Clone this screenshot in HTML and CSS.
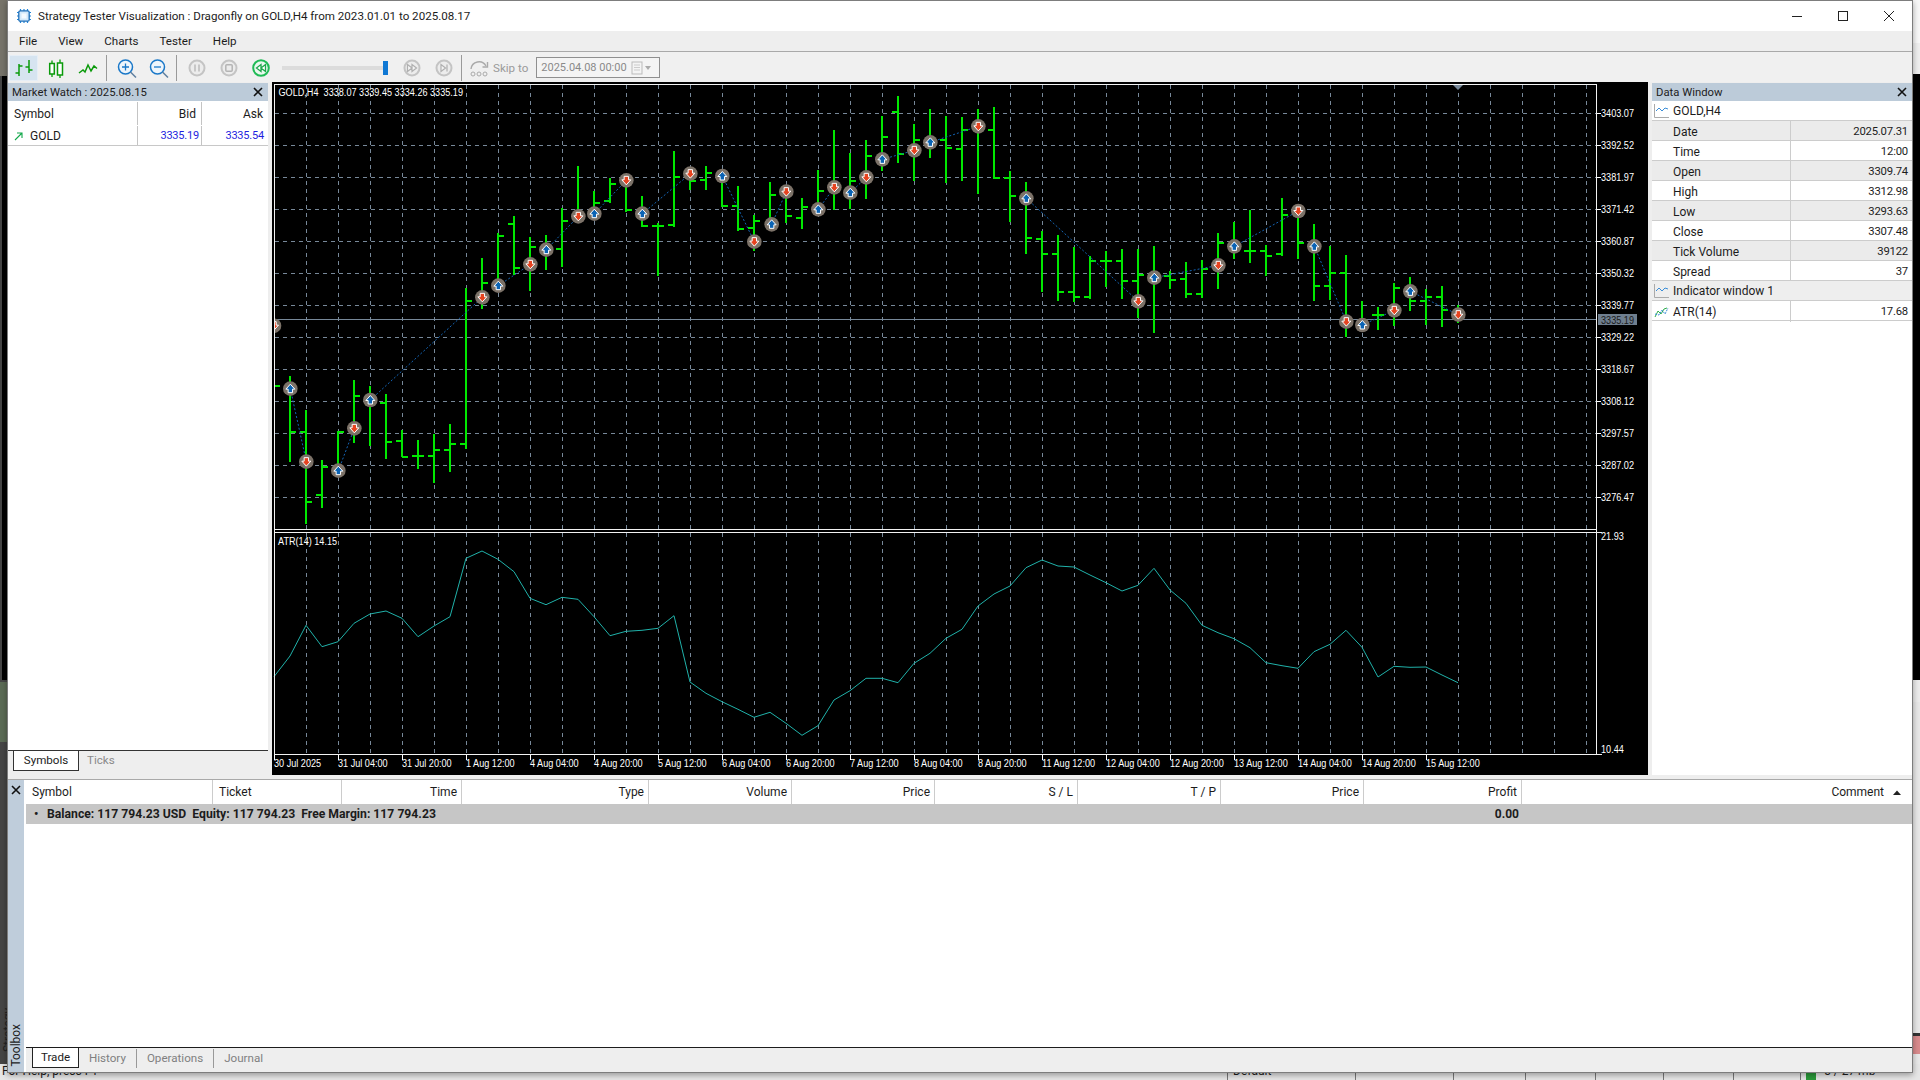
FILE: index.html
```html
<!DOCTYPE html>
<html lang="en">
<head>
<meta charset="utf-8">
<title>Strategy Tester Visualization</title>
<link rel="stylesheet" href="styles.css">
</head>
<body>
<div class="desktop">
  <div class="back-left-top"></div>
  <div class="back-left-chart"></div>
  <div class="back-left-green"></div>
  <div class="back-right-top"></div>
  <div class="back-right-chart"></div>
  <div class="back-right-low"></div>
  <div class="back-right-red"></div>
  <div class="back-vertical">Strategy Tester</div>
  <div class="statusbar">
    <div class="status-cell">For Help, press F1</div>
    <div class="status-cell">Default</div>
    <div class="status-cell"></div>
    <div class="status-cell"></div>
    <div class="status-cell"></div>
    <div class="status-cell"></div>
    <div class="status-cell"></div>
    <div class="status-cell"></div>
    <div class="status-cell status-mem"><span class="mem-bars"></span>5 / 27 mb</div>
  </div>

  <div class="window">
    <header class="titlebar">
      <svg class="app-icon" viewBox="0 0 16 16" width="16" height="16"><path d="M4.500 1v14M8 1v14M11.500 1v14M1 4.500h14M1 8h14M1 11.500h14" stroke="#1f83d8" stroke-width="1.200"/><rect x="2.800" y="2.800" width="10.400" height="10.400" rx="1.500" fill="#d4e9fa" stroke="#1f6fb8" stroke-width="1.300"/><rect x="5.500" y="5.500" width="5" height="5" fill="#f4fafe"/></svg>
      <span class="title-text">Strategy Tester Visualization : Dragonfly on GOLD,H4 from 2023.01.01 to 2025.08.17</span>
      <div class="win-controls">
        <div class="win-btn"><svg viewBox="0 0 12 12" width="12" height="12"><path d="M1 6.500h10" stroke="#222"/></svg></div>
        <div class="win-btn"><svg viewBox="0 0 12 12" width="12" height="12"><rect x="1.500" y="1.500" width="9" height="9" fill="none" stroke="#222"/></svg></div>
        <div class="win-btn"><svg viewBox="0 0 12 12" width="12" height="12"><path d="M1 1l10 10M11 1L1 11" stroke="#222"/></svg></div>
      </div>
    </header>

    <nav class="menubar">
      <span>File</span><span>View</span><span>Charts</span><span>Tester</span><span>Help</span>
    </nav>

    <div class="toolbar">
      <div class="tool tool-active"><svg viewBox="0 0 24 24" width="24" height="24"><path d="M7 8v12M3.500 17H7M7 10h3.500M17 4v13M13.500 11H17M17 14h3.500" fill="none" stroke="#0a9a0a" stroke-width="1.500"/></svg></div>
      <div class="tool"><svg viewBox="0 0 24 24" width="24" height="24"><path d="M8 4.500v3M8 18v3M16 3.500v3.500M16 19v3" stroke="#0a9a0a" stroke-width="1.300"/><rect x="5.700" y="7.500" width="4.600" height="10.500" fill="#fff" stroke="#0a9a0a" stroke-width="1.500"/><rect x="13.500" y="7" width="5" height="12" fill="#fff" stroke="#0a9a0a" stroke-width="1.500"/></svg></div>
      <div class="tool"><svg viewBox="0 0 24 24" width="24" height="24"><path d="M3 17l4-3 2 2 3-7 3 6 3-5 3 2.500" fill="none" stroke="#0a9a0a" stroke-width="1.500"/></svg></div>
      <div class="tool-sep tool-sep-a"></div>
      <div class="tool"><svg viewBox="0 0 24 24" width="24" height="24"><circle cx="10.500" cy="11" r="7" fill="#eef5fb" stroke="#1a78c8" stroke-width="1.500"/><path d="M10.500 7.500v7M7 11h7" stroke="#1a78c8" stroke-width="1.300"/><path d="M15.500 16l5.500 5.500" stroke="#5f7f9f" stroke-width="1.500"/></svg></div>
      <div class="tool"><svg viewBox="0 0 24 24" width="24" height="24"><circle cx="10.500" cy="11" r="7" fill="#eef5fb" stroke="#1a78c8" stroke-width="1.500"/><path d="M7 11h7" stroke="#1a78c8" stroke-width="1.300"/><path d="M15.500 16l5.500 5.500" stroke="#5f7f9f" stroke-width="1.500"/></svg></div>
      <div class="tool-sep"></div>
      <div class="tool tool-gap-a"><svg viewBox="0 0 24 24" width="24" height="24"><circle cx="12" cy="12" r="7.500" fill="#ececec" stroke="#c4c4c4" stroke-width="2"/><path d="M10 8.500v7M14 8.500v7" stroke="#bbb" stroke-width="1.500"/></svg></div>
      <div class="tool"><svg viewBox="0 0 24 24" width="24" height="24"><circle cx="12" cy="12" r="7.500" fill="#ececec" stroke="#c4c4c4" stroke-width="2"/><rect x="8.800" y="8.800" width="6.400" height="6.400" rx="1" fill="none" stroke="#b4b4b4" stroke-width="1.500"/></svg></div>
      <div class="tool"><svg viewBox="0 0 24 24" width="24" height="24"><circle cx="12" cy="12" r="7.800" fill="#e9f8ee" stroke="#1fbb55" stroke-width="2"/><path d="M12 8.500v7L7.500 12zM16.500 8.500v7L12 12z" fill="#fff" stroke="#1fa84d" stroke-width="1.300"/></svg></div>
      <div class="slider"><div class="slider-track"></div><div class="slider-thumb"></div></div>
      <div class="tool tool-gap-b"><svg viewBox="0 0 24 24" width="24" height="24"><circle cx="12" cy="12" r="7.500" fill="#ececec" stroke="#c4c4c4" stroke-width="2"/><path d="M7.500 8.500v7L12 12zM12 8.500v7l4.500-3.500z" fill="#f4f4f4" stroke="#b0b0b0" stroke-width="1.200"/></svg></div>
      <div class="tool"><svg viewBox="0 0 24 24" width="24" height="24"><circle cx="12" cy="12" r="7.500" fill="#ececec" stroke="#c4c4c4" stroke-width="2"/><path d="M9 8.500v7l4.500-3.500zM15 8.500v7" fill="#f4f4f4" stroke="#b0b0b0" stroke-width="1.200"/></svg></div>
      <div class="tool-sep"></div>
      <svg class="skip-icon" viewBox="0 0 24 24" width="24" height="24"><path d="M3 13a8 8 0 0 1 15-3" fill="none" stroke="#aaa" stroke-width="1.400"/><path d="M19.500 6v5h-5" fill="none" stroke="#aaa" stroke-width="1.400"/><circle cx="5" cy="18" r="2" fill="none" stroke="#aaa"/><circle cx="11" cy="18" r="2" fill="none" stroke="#aaa"/><circle cx="17" cy="18" r="2" fill="none" stroke="#aaa"/></svg>
      <span class="skip-label">Skip to</span>
      <div class="date-box">
        <span class="date-text">2025.04.08 00:00</span>
        <svg class="date-icon" viewBox="0 0 20 14" width="20" height="14"><rect x="1" y="1" width="10" height="12" fill="#f4f4f4" stroke="#bbb"/><path d="M3 4h6M3 6.500h6M3 9h6" stroke="#ccc"/><path d="M14 5h6l-3 4z" fill="#aaa"/></svg>
      </div>
    </div>

    <main class="main">
      <section class="panel">
        <div class="panel-head"><span>Market Watch : 2025.08.15</span><svg class="panel-x" viewBox="0 0 10 10" width="10" height="10"><path d="M1 1l8 8M9 1L1 9" stroke="#111" stroke-width="1.600"/></svg></div>
        <div class="mw-row mw-row-head">
          <div class="mw-cell">Symbol</div>
          <div class="mw-cell mw-num">Bid</div>
          <div class="mw-cell mw-num">Ask</div>
        </div>
        <div class="mw-row mw-row-body">
          <div class="mw-cell mw-sym"><svg viewBox="0 0 10 10" width="10" height="10"><path d="M1 9l7-7M3 2h5v5" fill="none" stroke="#12a84a" stroke-width="1.100"/></svg><span>GOLD</span></div>
          <div class="mw-cell mw-val">3335.19</div>
          <div class="mw-cell mw-val mw-last">3335.54</div>
        </div>
        <div class="mw-fill"></div>
        <div class="mw-tabs">
          <div class="mw-tab-on">Symbols</div>
          <div class="mw-tab-off">Ticks</div>
        </div>
      </section>

      <section class="chart">
        <svg id="chart" class="chart-svg" viewBox="272 82 1376 693" width="1376" height="693"></svg>
      </section>

      <section class="panel panel-data">
        <div class="panel-head"><span>Data Window</span><svg class="panel-x" viewBox="0 0 10 10" width="10" height="10"><path d="M1 1l8 8M9 1L1 9" stroke="#111" stroke-width="1.600"/></svg></div>
        <div class="dw-group">
          <svg class="dw-icon" viewBox="0 0 15 14" width="15" height="14"><path d="M.5 0v13.500H15" fill="none" stroke="#aaa"/><path d="M2 7l3-3 3 3 3-3 3 1" fill="none" stroke="#3b8ed8"/></svg>
          <span>GOLD,H4</span>
        </div>
        <div class="dw-row dw-alt"><div class="dw-k">Date</div><div class="dw-v">2025.07.31</div></div>
        <div class="dw-row"><div class="dw-k">Time</div><div class="dw-v">12:00</div></div>
        <div class="dw-row dw-alt"><div class="dw-k">Open</div><div class="dw-v">3309.74</div></div>
        <div class="dw-row"><div class="dw-k">High</div><div class="dw-v">3312.98</div></div>
        <div class="dw-row dw-alt"><div class="dw-k">Low</div><div class="dw-v">3293.63</div></div>
        <div class="dw-row"><div class="dw-k">Close</div><div class="dw-v">3307.48</div></div>
        <div class="dw-row dw-alt"><div class="dw-k">Tick Volume</div><div class="dw-v">39122</div></div>
        <div class="dw-row"><div class="dw-k">Spread</div><div class="dw-v">37</div></div>
        <div class="dw-group dw-group-alt">
          <svg class="dw-icon" viewBox="0 0 15 14" width="15" height="14"><path d="M.5 0v13.500H15" fill="none" stroke="#aaa"/><path d="M2 7l3-3 3 3 3-3 3 1" fill="none" stroke="#3b8ed8"/></svg>
          <span>Indicator window 1</span>
        </div>
        <div class="dw-row">
          <div class="dw-k dw-k-icon"><svg class="dw-icon" viewBox="0 0 15 14" width="15" height="14"><path d="M1 12l3-6 3 3 3-5 3-1" fill="none" stroke="#2fae4a"/><path d="M1 9l4 1 3-5 3 4 3-6" fill="none" stroke="#3b8ed8" stroke-dasharray="2 1"/></svg><span>ATR(14)</span></div>
          <div class="dw-v">17.68</div>
        </div>
      </section>
    </main>

    <section class="toolbox">
      <aside class="toolbox-strip">
        <svg class="strip-x" viewBox="0 0 10 10" width="10" height="10"><path d="M1 1l8 8M9 1L1 9" stroke="#111" stroke-width="1.600"/></svg>
        <span class="strip-label">Toolbox</span>
      </aside>
      <div class="toolbox-body">
        <div class="pos-grid pos-head">
          <div class="pos-cell pos-left">Symbol</div>
          <div class="pos-cell pos-left">Ticket</div>
          <div class="pos-cell">Time</div>
          <div class="pos-cell">Type</div>
          <div class="pos-cell">Volume</div>
          <div class="pos-cell">Price</div>
          <div class="pos-cell">S / L</div>
          <div class="pos-cell">T / P</div>
          <div class="pos-cell">Price</div>
          <div class="pos-cell">Profit</div>
          <div class="pos-cell pos-comment"><span>Comment</span><svg viewBox="0 0 8 5" width="8" height="5"><path d="M0 5l4-4.500L8 5z" fill="#222"/></svg></div>
        </div>
        <div class="pos-grid pos-balance">
          <div class="bal-text"><span class="bal-bullet">•</span><span>Balance: 117 794.23 USD&nbsp; Equity: 117 794.23&nbsp; Free Margin: 117 794.23</span></div>
          <div class="bal-profit">0.00</div>
        </div>
        <div class="pos-fill"></div>
        <div class="bottom-tabs">
          <div class="bt-on">Trade</div>
          <div class="bt-off">History</div>
          <div class="bt-off bt-sep">Operations</div>
          <div class="bt-off bt-sep">Journal</div>
        </div>
      </div>
    </section>
  </div>
</div>
<script src="chart.js"></script>
</body>
</html>
```

FILE: styles.css
```css
* { box-sizing: border-box; }
html, body { margin: 0; height: 100%; }
body { background: #454545; font: 12px Roboto, "Liberation Sans", sans-serif; color: #1c1c1c; overflow: hidden; }
.desktop { position: relative; width: 1920px; height: 1080px; overflow: hidden; }

/* other windows peeking out behind the main one */
.back-left-top { position: absolute; left: 0; top: 0; width: 8px; height: 76px; background: #77746a; }
.back-left-chart { position: absolute; left: 2px; top: 76px; width: 6px; height: 604px; background: #000; }
.back-left-green { position: absolute; left: 0; top: 682px; width: 8px; height: 60px; background: #5b6b55; }
.back-right-top { position: absolute; left: 1912px; top: 0; width: 8px; height: 74px; background: #efefef; border-top: 43px solid #f8f8f8; }
.back-right-chart { position: absolute; left: 1912px; top: 74px; width: 8px; height: 606px; background: #000; }
.back-right-low { position: absolute; left: 1912px; top: 680px; width: 8px; height: 400px; background: #e8e8e8; border-top: 22px solid #ececec; }
.back-right-red { position: absolute; left: 1912px; top: 1033px; width: 8px; height: 26px; background: #d98b8d; border-top: 3px solid #333; border-bottom: 5px solid #e8e8e8; }
.back-vertical { position: absolute; left: 1px; top: 977px; height: 75px; writing-mode: vertical-rl; transform: rotate(180deg); color: #222; font-size: 12px; line-height: 14px; }
.statusbar { position: absolute; left: 0; right: 0; top: 1064px; height: 16px; background: #e6e6e6; display: grid; grid-template-columns: 1227px 128px 98px 72px 70px 68px 70px 67px 1fr; line-height: 14px; }
.status-cell { border-left: 1px solid #777; padding-left: 5px; overflow: hidden; white-space: nowrap; }
.status-cell:first-child { border-left: 0; padding-left: 2px; }
.status-mem { display: flex; gap: 8px; }
.mem-bars { width: 10px; background: #2a9a3a; }

/* main window */
.window { position: absolute; left: 7px; top: 0; width: 1906px; height: 1073px; border: 1px solid #7d7d7d; background: #fff; box-shadow: 0 2px 6px rgba(0,0,0,.35); display: flex; flex-direction: column; }
.titlebar { height: 30px; flex: none; display: flex; align-items: center; padding-left: 8px; background: #fff; }
.app-icon { flex: none; margin-right: 6px; }
.title-text { white-space: nowrap; font-size: 11.600px; }
.win-controls { margin-left: auto; display: flex; height: 100%; }
.win-btn { width: 46px; display: flex; align-items: center; justify-content: center; }

.menubar { height: 21px; flex: none; background: #eee; border-bottom: 1px solid #a9a9a9; display: flex; align-items: center; gap: 21px; padding-left: 11px; font-size: 11.600px; }

.toolbar { height: 30px; flex: none; background: #f0f0f0; display: flex; align-items: center; gap: 3px; padding-left: 1px; padding-top: 1px; }
.tool { width: 29px; height: 26px; flex: none; display: flex; align-items: center; justify-content: center; border: 1px solid transparent; }
.tool-active { background: #d6e4f0; border-color: #e6eef6; }
.tool-sep { width: 1px; height: 26px; flex: none; background: #9a9a9a; }
.tool-sep-a { margin-left: 1px; margin-right: 2px; }
.tool-gap-a { margin-left: 2px; }
.tool-gap-b { margin-left: 6px; }
.slider { position: relative; width: 106px; height: 16px; flex: none; margin-left: 4px; }
.slider-track { position: absolute; left: 0; right: 0; top: 6px; height: 4px; background: #dcdcdc; }
.slider-thumb { position: absolute; right: 0; top: 1px; width: 5px; height: 14px; background: #0f78d4; }
.skip-icon { flex: none; margin-left: 3px; }
.skip-label { color: #9a9a9a; margin-left: -2px; white-space: nowrap; font-size: 11.600px; }
.date-box { width: 124px; height: 21px; flex: none; margin-left: 5px; border: 1px solid #8f8f8f; display: flex; align-items: center; padding-left: 4px; background: #f4f4f4; color: #8a8a8a; }
.date-text { font-size: 11px; width: 90px; white-space: nowrap; }
.date-icon { flex: none; margin-left: 0; }

.main { height: 697px; flex: none; background: #eee; display: flex; gap: 4px; padding-bottom: 4px; }
.panel { width: 260px; flex: none; background: #fff; margin-top: 1px; display: flex; flex-direction: column; }
.panel-head { height: 18px; flex: none; background: #bccbd9; display: flex; align-items: center; justify-content: space-between; padding: 0 5px 0 4px; white-space: nowrap; font-size: 11.300px; }
.panel-x { flex: none; }

.mw-row { display: grid; grid-template-columns: 130px 64px 66px; flex: none; }
.mw-row-head { height: 24px; padding-top: 1px; }
.mw-row-body { height: 21px; border-bottom: 1px solid #c8c8c8; padding-top: 1px; }
.mw-cell { display: flex; align-items: center; border-right: 1px solid #c4c4c4; padding-left: 6px; }
.mw-cell:nth-child(3) { border-right: 0; }
.mw-num { justify-content: flex-end; padding-right: 5px; }
.mw-sym { gap: 6px; }
.mw-val { justify-content: flex-end; padding-right: 2px; color: #1f1fe0; font-size: 11px; letter-spacing: -.2px; }
.mw-last { padding-right: 4px; }
.mw-fill { flex: 1; }
.mw-tabs { height: 25px; flex: none; background: #eee; display: flex; align-items: flex-start; border-top: 1px solid #333; padding-left: 5px; font-size: 11.600px; }
.mw-tab-on { width: 66px; height: 20px; background: #fff; border: 1px solid #333; border-top: 0; display: flex; align-items: center; justify-content: center; padding-bottom: 2px; }
.mw-tab-off { margin-left: 8px; height: 17px; display: flex; align-items: center; color: #8a8a8a; }

.chart { width: 1376px; flex: none; background: #000; }
.chart-svg { display: block; }
.ct { font: 11px "Liberation Sans", Arial, sans-serif; fill: #fff; }
.ct-dark { fill: #1a1a1a; }

.panel-data { margin-top: 1px; }
.dw-group { height: 20px; flex: none; display: flex; align-items: center; gap: 4px; padding: 1px 0 0 2px; border-bottom: 1px solid #ccc; }
.dw-group-alt { background: #eee; }
.dw-icon { flex: none; }
.dw-row { height: 20px; flex: none; display: grid; grid-template-columns: 139px 121px; border-bottom: 1px solid #ccc; }
.dw-alt { background: #ebebeb; }
.dw-k { padding: 1px 0 0 21px; border-right: 1px solid #ccc; display: flex; align-items: center; }
.dw-k-icon { padding-left: 2px; gap: 4px; }
.dw-v { text-align: right; padding-right: 4px; font-size: 11.300px; letter-spacing: -.2px; line-height: 21px; }

.toolbox { flex: 1; min-height: 0; display: flex; border-top: 1px solid #a9a9a9; background: #fff; }
.toolbox-strip { width: 16px; flex: none; background: #bfcddb; display: flex; flex-direction: column; align-items: center; justify-content: space-between; padding: 5px 0 5px; }
.strip-x { flex: none; }
.strip-label { writing-mode: vertical-rl; transform: rotate(180deg); line-height: 14px; }
.toolbox-body { flex: 1; min-width: 0; margin-left: 2px; display: flex; flex-direction: column; }
.pos-grid { display: grid; grid-template-columns: 187px 129px 120px 187px 143px 143px 143px 143px 143px 158px 1fr; flex: none; }
.pos-head { height: 24px; }
.pos-cell { display: flex; align-items: center; justify-content: flex-end; padding: 0 4px; border-right: 1px solid #ccc; white-space: nowrap; }
.pos-left { justify-content: flex-start; padding-left: 6px; }
.pos-comment { border-right: 0; gap: 9px; padding-right: 11px; }
.pos-balance { height: 20px; background: #c6c6c6; font-weight: 700; align-items: center; }
.bal-text { grid-column: 1 / 10; display: flex; white-space: nowrap; padding-left: 8px; font-size: 12.200px; }
.bal-bullet { width: 13px; }
.bal-profit { text-align: right; padding-right: 3px; }
.pos-fill { flex: 1; }
.bottom-tabs { height: 25px; flex: none; background: #eee; border-top: 1px solid #1c1c1c; display: flex; align-items: flex-start; padding-left: 6px; font-size: 11.600px; }
.bt-on { width: 47px; height: 20px; background: #fff; border: 1px solid #222; border-top: 0; display: flex; align-items: center; justify-content: center; padding-bottom: 1px; }
.bt-off { height: 19px; display: flex; align-items: center; padding: 0 10px 2px; color: #808080; margin-top: 1px; }
.bt-sep { border-left: 1px solid #999; }
```

FILE: chart.js
```js
(function () {
  var svg = document.getElementById('chart');
  var parts = [];
  var Y = function (z) { return Math.round(80 + z / 3); };
  var i;

  /* grid */
  var grid = '';
  for (i = 0; i < 13; i++) grid += 'M275 ' + (113.5 + 32 * i) + 'H1596';
  for (i = 0; i <= 40; i++) {
    var gx = 306.5 + 32 * i;
    grid += 'M' + gx + ' 85V530M' + gx + ' 533V754';
  }
  parts.push('<path d="' + grid + '" fill="none" stroke="#778899" stroke-dasharray="4 4" shape-rendering="crispEdges"/>');

  /* current price line */
  parts.push('<path d="M275 319.5H1596" stroke="#778899" fill="none"/>');
  /* shift marker */
  parts.push('<path d="M1453 85h10l-5 5z" fill="#778899"/>');

  /* bars: high, low, open, close in picture units */
  var bars = [
    [888,1145,null,1056],[990,1332,1056,1266],[1140,1283,1244,1160],[1052,1170,null,1056],
    [900,1088,null,947],[918,1098,null,null],[942,1136,968,1085],[1050,1132,1082,1130],
    [1080,1166,1128,1128],[1062,1208,1128,1110],[1032,1175,1110,1092],[625,1106,1092,662],
    [535,686,null,608],[460,600,null,467],[408,584,432,565],[472,632,560,500],
    [465,570,null,null],[385,560,507,422],[258,430,null,null],[333,420,null,370],
    [294,368,363,311],[300,395,null,390],[348,442,null,437],[428,587,437,437],
    [213,440,436,291],[265,330,null,302],[258,330,300,278],[270,382,null,378],
    [318,452,378,448],[405,513,443,423],[305,420,null,344],[320,430,null,408],
    [355,447,413,380],[270,400,null,332],[150,390,null,null],[219,388,null,302],
    [180,357,null,228],[107,272,null,170],[48,250,96,222],[132,303,null,180],
    [87,234,null,null],[108,308,180,204],[111,302,207,150],[86,342,null,null],
    [82,298,150,295],[273,426,295,348],[307,522,null,473],[453,636,477,522],
    [465,662,522,636],[500,666,636,651],[529,656,651,543],[514,621,543,543],
    [507,656,543,603],[507,715,603,585],[498,758,null,null],[572,627,588,600],
    [546,653,597,642],[540,653,642,567],[460,627,null,489],[426,537,null,null],
    [390,548,512,512],[496,588,513,527],[354,527,523,404],[390,538,null,488],
    [432,663,null,618],[498,660,618,578],[525,770,578,null],[662,750,null,null],
    [682,750,705,705],[608,738,null,623],[592,692,null,662],[627,735,662,650],
    [618,740,650,689],[676,728,null,null]
  ];
  var bd = 'M275 ' + Y(917) + 'H280';
  bars.forEach(function (b, k) {
    var x = 290 + 16 * k;
    bd += 'M' + x + ' ' + Y(b[0]) + 'V' + Y(b[1]);
    if (b[2] !== null) bd += 'M' + (x - 6) + ' ' + Y(b[2]) + 'H' + x;
    if (b[3] !== null) bd += 'M' + x + ' ' + Y(b[3]) + 'H' + (x + 6);
  });
  parts.push('<path d="' + bd + '" fill="none" stroke="#00e800" stroke-width="2" shape-rendering="crispEdges"/>');

  /* trades: entry and exit points, in real pixels */
  var A = function (z, y) { return [270 + z / 3, 80 + y / 3]; };
  var B = function (z, y) { return [770 + z / 3, 80 + y / 3]; };
  var C = function (z, y) { return [1270 + z / 3, 80 + y / 3]; };
  var trades = [
    [A(61,926),A(109,1145)],[A(205,1172),A(253,1045)],[A(301,960),A(637,652)],
    [A(685,617),A(781,553)],[A(829,509),A(925,409)],[A(973,401),A(1069,301)],
    [A(1117,401),A(1261,281)],[A(1357,288),A(1453,485)],[B(5,433),B(49,335)],
    [B(145,388),B(193,322)],[B(241,338),B(289,292)],[B(337,238),B(433,211)],
    [B(481,187),B(625,139)],[B(769,355),B(1105,664)],[B(1153,593),B(1345,556)],
    [B(1393,499),C(85,393)],[C(133,499),C(229,725)],[C(277,735),C(373,691)],
    [C(421,634),C(565,704)]
  ];
  var td = '';
  trades.forEach(function (t) { td += 'M' + t[0][0] + ' ' + t[0][1] + 'L' + t[1][0] + ' ' + t[1][1]; });
  parts.push('<path d="' + td + '" fill="none" stroke="#1464b4" stroke-dasharray="2 2"/>');

  function marker(p, up) {
    var arrow = up
      ? 'M0 -4.500L4.500 .500H2.200V4H-2.200V.500H-4.500Z'
      : 'M0 4.500L4.500 -.500H2.200V-4H-2.200V-.500H-4.500Z';
    return '<g transform="translate(' + p[0] + ' ' + p[1] + ')"><circle r="7.300" fill="#7c7268"/>' +
      '<path d="' + arrow + '" fill="' + (up ? '#0b63b4' : '#e6431f') + '" stroke="#fff" stroke-width="1"/></g>';
  }
  parts.push('<clipPath id="plot"><rect x="275" y="85" width="1321" height="445"/></clipPath>');
  var mk = marker(A(12, 737), false);
  trades.forEach(function (t) { mk += marker(t[0], true) + marker(t[1], false); });
  parts.push('<g clip-path="url(#plot)">' + mk + '</g>');

  /* ATR line */
  var atr = [470,408,316,380,365,310,282,273,295,350,318,290,115,93,118,155,235,254,232,238,290,347,334,331,325,287,486,520,545,568,592,577,610,646,617,540,512,475,475,488,430,400,355,328,258,222,198,143,120,138,141,165,188,213,196,145,210,250,316,338,356,383,428,437,445,395,373,331,382,471,439,442,441,465,488];
  var pts = atr.map(function (z, k) { return (274 + 16 * k) + ',' + (520 + z / 3).toFixed(1); }).join(' ');
  parts.push('<polyline points="' + pts + '" fill="none" stroke="#20b2aa"/>');

  /* frames */
  parts.push('<path d="M274.500 84.500H1596.500V754.500H274.500ZM274.500 529.500H1596.500M274.500 532.500H1601.500M1596.500 754.500H1601.500" fill="none" stroke="#f2f2f2" shape-rendering="crispEdges"/>');

  /* ticks and axis text */
  var ticks = '';
  var S = 0.83;
  function text(x, y, s, cls) {
    return '<text class="ct ' + (cls || '') + '" transform="translate(' + x + ' ' + y + ') scale(' + S + ' 1)">' + s + '</text>';
  }
  var prices = ['3403.07','3392.52','3381.97','3371.42','3360.87','3350.32','3339.77','3329.22','3318.67','3308.12','3297.57','3287.02','3276.47'];
  prices.forEach(function (p, k) {
    var y = 113.5 + 32 * k;
    ticks += 'M1597 ' + y + 'H1601';
    parts.push(text(1601, y + 3.500, p));
  });
  var times = ['30 Jul 2025','31 Jul 04:00','31 Jul 20:00','1 Aug 12:00','4 Aug 04:00','4 Aug 20:00','5 Aug 12:00','6 Aug 04:00','6 Aug 20:00','7 Aug 12:00','8 Aug 04:00','8 Aug 20:00','11 Aug 12:00','12 Aug 04:00','12 Aug 20:00','13 Aug 12:00','14 Aug 04:00','14 Aug 20:00','15 Aug 12:00'];
  times.forEach(function (t, k) {
    var x = 274 + 64 * k;
    ticks += 'M' + (x + .5) + ' 755V760';
    parts.push(text(x, 767, t));
  });
  parts.push('<path d="' + ticks + '" fill="none" stroke="#fff" shape-rendering="crispEdges"/>');
  parts.push('<rect x="1598" y="314" width="39" height="11" fill="#6f7f8f"/>');
  parts.push(text(1601, 323.500, '3335.19', 'ct-dark'));
  parts.push(text(1601, 540, '21.93'));
  parts.push(text(1601, 753, '10.44'));
  parts.push(text(278.500, 96, 'GOLD,H4&#160;&#160;3338.07 3339.45 3334.26 3335.19'));
  parts.push(text(278, 544.500, 'ATR(14) 14.15'));

  svg.innerHTML = parts.join('');
})();
```
